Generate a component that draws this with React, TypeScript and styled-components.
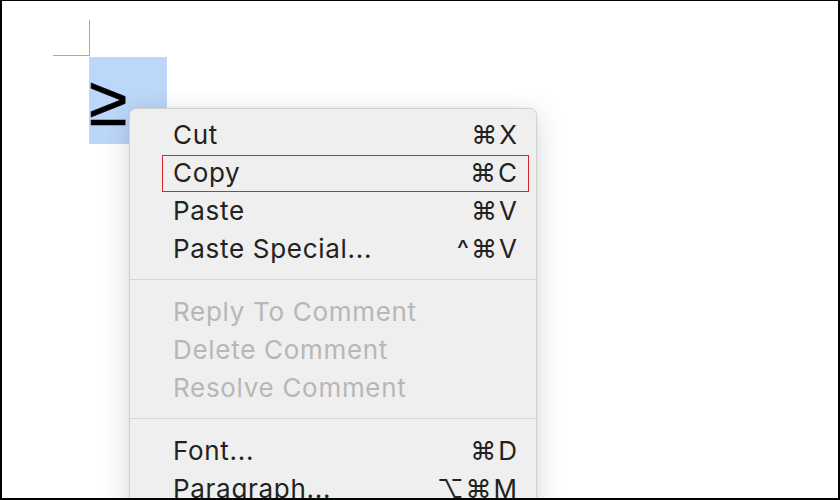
import React from "react";
import styled, { createGlobalStyle } from "styled-components";

const Global = createGlobalStyle`
  html, body { margin: 0; padding: 0; background: #ffffff; }
  * { box-sizing: border-box; }
`;

const Frame = styled.div`
  position: relative;
  width: 840px;
  height: 500px;
  border: 2px solid #000;
  border-top-width: 1px;
  background: #fff;
  overflow: hidden;
  padding: 19px 0 0 51px;
`;

const CropMark = styled.div`
  width: 37px;
  height: 36px;
  border-right: 1.5px solid #aaaaaa;
  border-bottom: 1.5px solid #aaaaaa;
`;

const Selection = styled.div`
  margin-left: 36px;
  margin-top: 1px;
  width: 78px;
  height: 87px;
  background: #bcd7f9;
  display: flex;
  align-items: flex-start;
  padding: 8px 0 0 0;
`;

const Glyph = styled.span`
  font-family: "Liberation Sans", Arial, sans-serif;
  font-size: 70px;
  line-height: 72px;
  color: #000;
  font-weight: 400;
  -webkit-text-stroke: 0.6px #000;
`;

const Menu = styled.div`
  position: absolute;
  left: 127px;
  top: 107px;
  width: 408px;
  height: 420px;
  background: #efefef;
  border: 1px solid #d2d2d2;
  border-radius: 7px;
  box-shadow: 0 6px 28px rgba(0, 0, 0, 0.16), 0 0 3px rgba(0, 0, 0, 0.06);
  padding-top: 6px;
  display: flex;
  flex-direction: column;
`;

const Row = styled.div<{ $disabled?: boolean }>`
  position: relative;
  height: 38px;
  display: flex;
  align-items: center;
  justify-content: space-between;
  padding: 0 19px 0 43px;
  font-family: "Inter", "Liberation Sans", "DejaVu Sans", sans-serif;
  font-size: 26px;
  letter-spacing: 0.7px;
  color: ${(p) => (p.$disabled ? "#b7b7b7" : "#222222")};
`;

const Label = styled.span``;

const Shortcut = styled.span`
  font-family: "Inter", "DejaVu Sans", sans-serif;
  letter-spacing: 2px;
  margin-right: -2px;
`;

const Highlight = styled.span`
  position: absolute;
  left: 32px;
  right: 7px;
  top: 2px;
  bottom: -1px;
  border: 1.5px solid #d8262c;
  pointer-events: none;
`;

const Separator = styled.div`
  height: 25px;
  display: flex;
  align-items: center;
  &::after {
    content: "";
    flex: 1;
    height: 1.5px;
    background: #d6d6d6;
  }
`;

type Item = { label: string; shortcut?: string; disabled?: boolean; marked?: boolean } | "sep";

const items: Item[] = [
  { label: "Cut", shortcut: "⌘X" },
  { label: "Copy", shortcut: "⌘C", marked: true },
  { label: "Paste", shortcut: "⌘V" },
  { label: "Paste Special...", shortcut: "^⌘V" },
  "sep",
  { label: "Reply To Comment", disabled: true },
  { label: "Delete Comment", disabled: true },
  { label: "Resolve Comment", disabled: true },
  "sep",
  { label: "Font...", shortcut: "⌘D" },
  { label: "Paragraph...", shortcut: "⌥⌘M" },
];

export default function App() {
  return (
    <>
      <Global />
      <Frame>
        <CropMark />
        <Selection>
          <Glyph>≥</Glyph>
        </Selection>
        <Menu>
          {items.map((it, i) =>
            it === "sep" ? (
              <Separator key={i} />
            ) : (
              <Row key={i} $disabled={it.disabled}>
                <Label>{it.label}</Label>
                {it.shortcut && <Shortcut>{it.shortcut}</Shortcut>}
                {it.marked && <Highlight />}
              </Row>
            )
          )}
        </Menu>
      </Frame>
    </>
  );
}
